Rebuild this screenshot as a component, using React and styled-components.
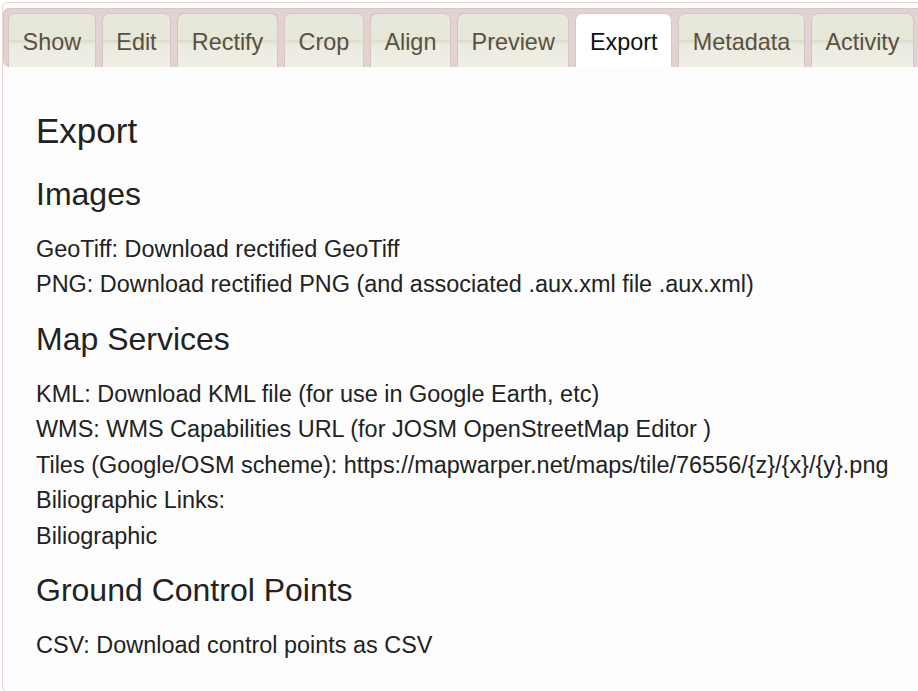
import React from 'react';
import styled, { createGlobalStyle } from 'styled-components';

const GlobalStyle = createGlobalStyle`
  html, body {
    margin: 0;
    padding: 0;
    background: #fff;
    overflow: hidden;
  }
  body {
    font-family: "Liberation Sans", Arial, sans-serif;
    color: #222;
  }
`;

const TabsWrapper = styled.div`
  width: 960px;
  margin: 2px 0 0 2px;
  padding: 5px 0 0 0;
  border: 1px solid #e8d7ce;
  border-radius: 5px;
  background: #fdfdfd;
`;

const TabBar = styled.ul`
  display: flex;
  gap: 6px;
  list-style: none;
  margin: 0;
  padding: 4px 4px 0;
  background: #e2d2d2;
  border: 1px solid #d9c6c6;
  border-bottom: none;
  border-radius: 6px;
  height: 54px;
  box-sizing: content-box;
`;

const Tab = styled.li`
  display: flex;
  align-items: flex-start;
  padding: 14px 13.6px 0;
  height: 54px;
  box-sizing: border-box;
  font-size: 23.4px;
  line-height: 28px;
  border: 1px solid ${(p) => (p.$active ? '#d9c6c6' : '#d6c5c2')};
  border-bottom: none;
  border-radius: 7px 7px 0 0;
  color: ${(p) => (p.$active ? '#111' : '#5a5040')};
  background: ${(p) =>
    p.$active
      ? '#fff'
      : 'linear-gradient(#e8e8dc 0%, #e6e6d9 48%, #dcdccd 51%, #ebebe0 58%, #efefe6 100%)'};
  cursor: pointer;
  white-space: nowrap;
`;

const Panel = styled.div`
  padding: 43px 30px 27px 33px;
`;

const Title = styled.h1`
  font-size: 35px;
  font-weight: 400;
  line-height: 42px;
  margin: 0 0 22.5px;
  color: #222;
`;

const Section = styled.h2`
  font-size: 32px;
  font-weight: 400;
  line-height: 38px;
  margin: 17px 0 19px;
  color: #222;
`;

const Line = styled.p`
  font-size: 23.45px;
  line-height: 35.5px;
  margin: 0;
  color: #222;
  white-space: nowrap;
`;

const tabs = ['Show', 'Edit', 'Rectify', 'Crop', 'Align', 'Preview', 'Export', 'Metadata', 'Activity'];

const sections = [
  {
    title: 'Images',
    lines: [
      'GeoTiff: Download rectified GeoTiff',
      'PNG: Download rectified PNG (and associated .aux.xml file .aux.xml)',
    ],
  },
  {
    title: 'Map Services',
    lines: [
      'KML: Download KML file (for use in Google Earth, etc)',
      'WMS: WMS Capabilities URL (for JOSM OpenStreetMap Editor )',
      'Tiles (Google/OSM scheme): https://mapwarper.net/maps/tile/76556/{z}/{x}/{y}.png',
      'Biliographic Links:',
      'Biliographic',
    ],
  },
  {
    title: 'Ground Control Points',
    lines: ['CSV: Download control points as CSV'],
  },
];

const App = () => {
  return (
    <>
      <GlobalStyle />
      <TabsWrapper>
        <TabBar>
          {tabs.map((t) => (
            <Tab key={t} $active={t === 'Export'}>
              {t}
            </Tab>
          ))}
        </TabBar>
        <Panel>
          <Title>Export</Title>
          {sections.map((s) => (
            <div key={s.title}>
              <Section>{s.title}</Section>
              {s.lines.map((l) => (
                <Line key={l}>{l}</Line>
              ))}
            </div>
          ))}
        </Panel>
      </TabsWrapper>
    </>
  );
};

export default App;
